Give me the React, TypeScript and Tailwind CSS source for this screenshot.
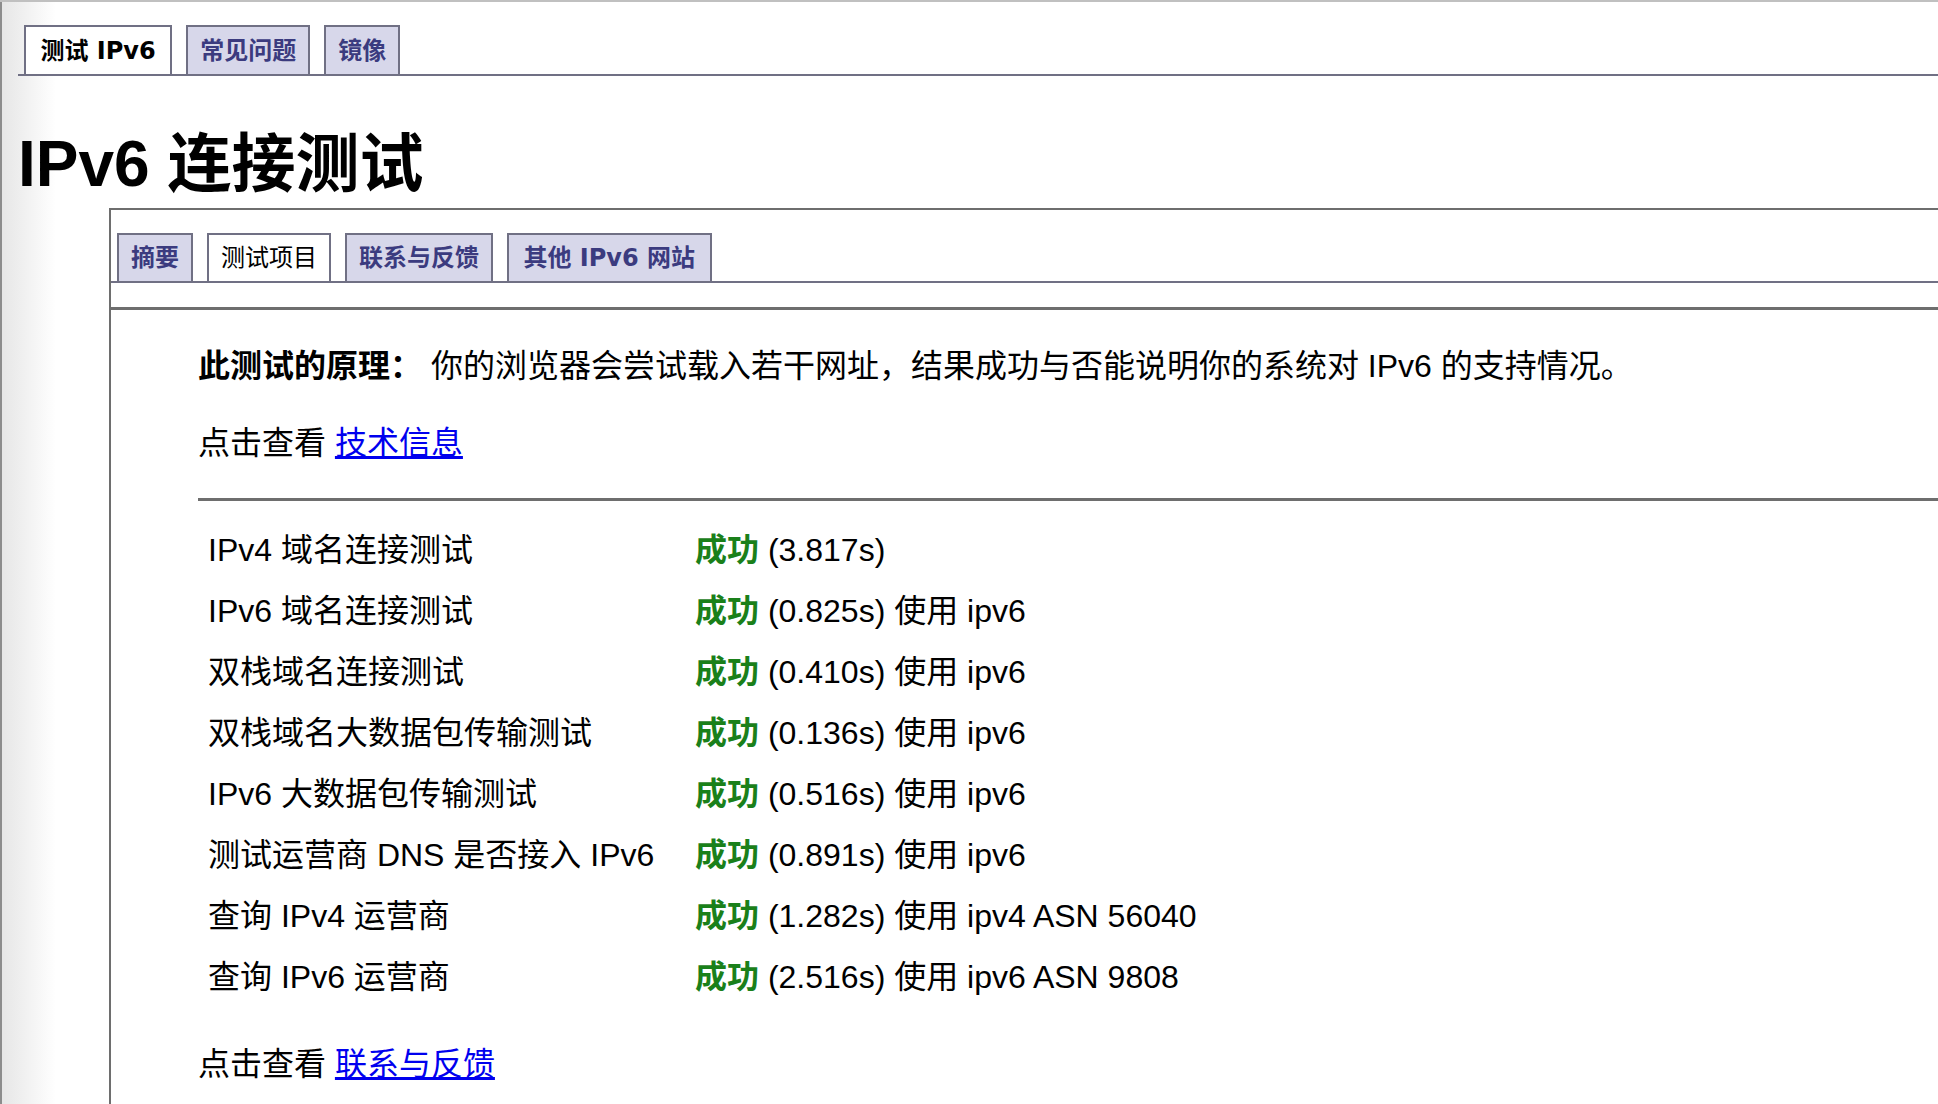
import React from "react";

const rows: { label: string; rest: string }[] = [
  { label: "IPv4 域名连接测试", rest: "(3.817s)" },
  { label: "IPv6 域名连接测试", rest: "(0.825s) 使用 ipv6" },
  { label: "双栈域名连接测试", rest: "(0.410s) 使用 ipv6" },
  { label: "双栈域名大数据包传输测试", rest: "(0.136s) 使用 ipv6" },
  { label: "IPv6 大数据包传输测试", rest: "(0.516s) 使用 ipv6" },
  { label: "测试运营商 DNS 是否接入 IPv6", rest: "(0.891s) 使用 ipv6" },
  { label: "查询 IPv4 运营商", rest: "(1.282s) 使用 ipv4 ASN 56040" },
  { label: "查询 IPv6 运营商", rest: "(2.516s) 使用 ipv6 ASN 9808" },
];

function Tab({
  label,
  active,
  height,
  bold = true,
  pad = "px-[12px]",
}: {
  label: string;
  active?: boolean;
  height: string;
  bold?: boolean;
  pad?: string;
}) {
  return (
    <div
      className={
        "flex items-center border-2 border-b-0 border-[#707084] font-['DejaVu_Sans','Noto_Sans_CJK_SC',sans-serif] text-[24px] leading-none whitespace-pre " +
        pad +
        " " +
        height +
        " " +
        (active
          ? "bg-white text-black " + (bold ? "font-bold" : "font-normal")
          : "bg-[#d7d7ea] text-[#3b3b7f] font-bold")
      }
    >
      {label}
    </div>
  );
}

export default function App() {
  return (
    <div className="flex h-[1104px] w-full flex-col overflow-hidden border-t-2 border-[#c0c0c0] bg-[linear-gradient(to_right,#8c8c8c_0px,#8c8c8c_2px,#e6e6e6_2px,#ffffff_56px)] pl-[18px] font-['Liberation_Sans','Noto_Sans_CJK_SC',sans-serif] text-black">
      {/* top tabs */}
      <div className="mt-[23px] flex items-end gap-[14px] border-b-2 border-[#707084] pl-[6px]">
        <Tab label="测试 IPv6" active height="h-[49px]" pad="px-[14.5px]" />
        <Tab label="常见问题" height="h-[49px]" />
        <Tab label="镜像" height="h-[49px]" />
      </div>

      {/* heading */}
      <h1 className="mt-[52px] h-[72px] text-[64px] font-bold leading-[72px]">
        IPv6 连接测试
      </h1>

      {/* panel */}
      <div className="ml-[91px] mt-[8px] flex-1 border-l-2 border-t-2 border-[#6e6e6e]">
        <div className="mt-[23px] flex items-end gap-[14px] border-b-2 border-[#707084] pl-[6px]">
          <Tab label="摘要" height="h-[48px]" />
          <Tab label="测试项目" active bold={false} height="h-[48px]" />
          <Tab label="联系与反馈" height="h-[48px]" />
          <Tab label="其他 IPv6 网站" height="h-[48px]" pad="px-[14.5px]" />
        </div>
        <div className="h-[27px] border-b-[3px] border-[#6e6e6e]" />

        <div className="pl-[87px] text-[32px] leading-[48px]">
          <p className="mt-[32px] whitespace-nowrap">
            <span className="font-bold">此测试的原理：</span> 你的浏览器会尝试载入若干网址，结果成功与否能说明你的系统对 IPv6 的支持情况。
          </p>
          <p className="mt-[29px]">
            点击查看{" "}
            <a href="#" className="text-[#0000ee] underline">
              技术信息
            </a>
          </p>
          <div className="mt-[31px] h-[3px] bg-[#6e6e6e]" />

          <div className="mt-[18px] flex flex-col">
            {rows.map((r) => (
              <div key={r.label} className="flex h-[61px] items-center whitespace-nowrap">
                <div className="w-[497px] pl-[10px]">{r.label}</div>
                <div>
                  <span className="font-bold text-[#1a801a]">成功</span> {r.rest}
                </div>
              </div>
            ))}
          </div>

          <p className="mt-[33px]">
            点击查看{" "}
            <a href="#" className="text-[#0000ee] underline">
              联系与反馈
            </a>
          </p>
        </div>
      </div>
    </div>
  );
}
